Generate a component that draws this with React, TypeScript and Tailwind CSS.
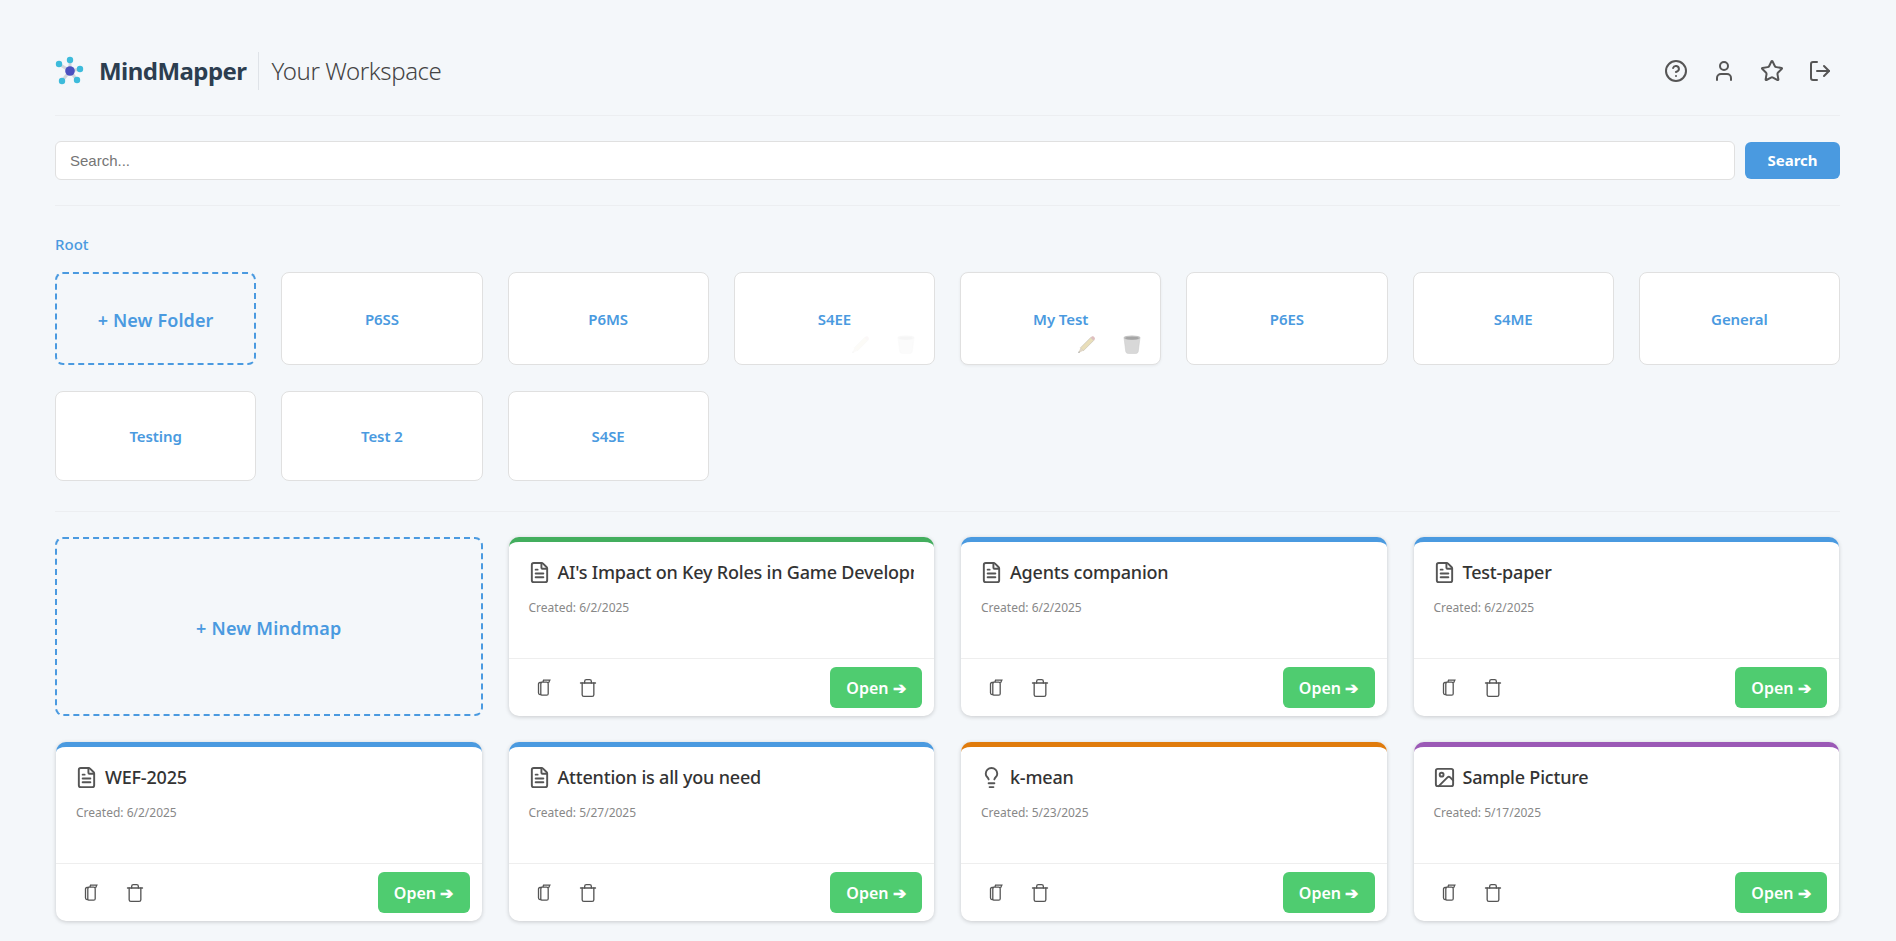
import { CircleHelp, User, Star, LogOut, FileText, Lightbulb, Image, Trash } from "lucide-react";
import type { ReactNode } from "react";

const FONT = "font-['Noto_Sans','Open_Sans',sans-serif]";

function Logo() {
  return (
    <svg width="30" height="30" viewBox="0 0 30 30" className="shrink-0">
      <g stroke="#d0d5dc" strokeWidth="3">
        <line x1="15" y1="15" x2="15" y2="4" />
        <line x1="15" y1="15" x2="4" y2="8" />
        <line x1="15" y1="15" x2="25" y2="13" />
        <line x1="15" y1="15" x2="7" y2="25" />
        <line x1="15" y1="15" x2="22" y2="24" />
      </g>
      <circle cx="15" cy="15" r="4.8" fill="#4a50c0" />
      <g fill="#3dbbdb">
        <circle cx="15" cy="4" r="3.2" />
        <circle cx="4" cy="8" r="3.2" />
        <circle cx="25" cy="13" r="3.2" />
        <circle cx="7" cy="25" r="3.2" />
        <circle cx="22" cy="24" r="3.2" />
      </g>
    </svg>
  );
}

function CopyIcon() {
  return (
    <svg width="14" height="18" viewBox="0 0 14 18" fill="none" stroke="#555" strokeWidth="1.3" className="shrink-0">
      <path d="M5 3.5 H3 Q1.5 3.5 1.5 5 V14 Q1.5 15.5 3 15.5 H4" />
      <rect x="3.8" y="3.2" width="7.4" height="13" rx="1.5" />
      <path d="M6 3 L6.5 1.2 H12.8 L11.5 4" />
    </svg>
  );
}

function Pencil() {
  return (
    <svg width="19" height="19" viewBox="0 0 18 18" className="shrink-0">
      <path d="M3.2 12.2 L13 2.4 L15.8 5.2 L6 15 Z" fill="#e4d6a8" stroke="#b5b0a0" strokeWidth="0.6" />
      <path d="M13 2.4 L14.2 1.3 Q15 0.8 15.8 1.4 L16.8 2.5 Q17.3 3.2 16.8 4 L15.8 5.2 Z" fill="#d8b0b0" />
      <path d="M3.2 12.2 L6 15 L1.2 17 Z" fill="#d9cdb8" />
      <path d="M1.8 15.4 L2.8 16.4 L1.2 17 Z" fill="#777" />
    </svg>
  );
}

function Bin() {
  return (
    <svg width="18" height="19" viewBox="0 0 17 18" className="shrink-0">
      <path d="M1 3 L2.6 15.6 Q3 17.6 5 17.6 H12 Q14 17.6 14.4 15.6 L16 3 Z" fill="#cfcfcf" stroke="#bdbdbd" strokeWidth="0.5" />
      <ellipse cx="8.5" cy="2.6" rx="8" ry="2.2" fill="#b5b5b5" />
      <ellipse cx="8.5" cy="3" rx="6.5" ry="1.4" fill="#8f8f8f" />
    </svg>
  );
}

function Folder({ name, actions, h }: { name: string; actions?: "faint" | "shown"; h: string }) {
  return (
    <div className={`relative flex items-center justify-center pt-px bg-white rounded-[8px] border border-[#e0e0e0] ${h} ${actions === "shown" ? "shadow-[0_1px_3px_rgba(0,0,0,0.06)]" : ""}`}>
      <span className="text-[#4a9ae0] text-[15px] font-semibold tracking-[-0.1px]">{name}</span>
      {actions && (
        <div className={`absolute right-[19px] bottom-[10px] flex gap-[27px] ${actions === "faint" ? "opacity-[0.08]" : "opacity-80"}`}>
          <Pencil />
          <Bin />
        </div>
      )}
    </div>
  );
}

function Card({ title, date, color, icon }: { title: string; date: string; color: string; icon: ReactNode }) {
  return (
    <div className={`mx-px flex flex-col h-[179px] bg-white rounded-[10px] border-t-[5px] shadow-[0_1px_4px_rgba(0,0,0,0.18)] overflow-hidden ${color}`}>
      <div className="flex-1 px-[20px] pt-[15px]">
        <div className="flex items-center gap-[7px] -ml-px h-[30px] overflow-hidden whitespace-nowrap">
          {icon}
          <span className="text-[18px] font-medium text-[#333] tracking-[-0.2px]">{title}</span>
        </div>
        <div className="mt-[12px] text-[12px] text-[#888]">Created: {date}</div>
      </div>
      <div className="flex items-center justify-between h-[58px] border-t border-[#eeeeee] pl-[28px] pr-[12px]">
        <div className="flex items-center gap-[27px]">
          <CopyIcon />
          <Trash size={20} color="#555" strokeWidth={1.6} />
        </div>
        <button className="h-[41px] w-[92px] rounded-[6px] bg-[#4fcc70] text-white text-[16px] font-semibold">Open ➔</button>
      </div>
    </div>
  );
}

const docIcon = <FileText size={23} color="#555" strokeWidth={2} className="shrink-0" />;

export default function App() {
  return (
    <div className={`min-h-[941px] bg-[#f4f7fa] pl-[55px] pr-[56px] pt-[32px] ${FONT}`}>
      <header className="flex items-center justify-between h-[84px] pb-[5px] border-b border-[#eceef1]">
        <div className="flex items-center">
          <Logo />
          <span className="ml-[14px] text-[24px] font-bold text-[#2c3e50] tracking-[-0.55px]">MindMapper</span>
          <span className="ml-[12px] w-px h-[38px] bg-[#dfe3e8]" />
          <span className="ml-[12px] text-[24px] font-light text-[#444] tracking-[-0.4px]">Your Workspace</span>
        </div>
        <div className="flex items-center gap-[24px] pr-[8px]">
          <CircleHelp size={24} color="#555" strokeWidth={2} />
          <User size={24} color="#555" strokeWidth={2} />
          <Star size={24} color="#555" strokeWidth={2} />
          <LogOut size={24} color="#555" strokeWidth={2} />
        </div>
      </header>

      <div className="flex items-center gap-[10px] h-[90px] border-b border-[#eceef1]">
        <input
          placeholder="Search..."
          className="flex-1 h-[39px] bg-white rounded-[6px] border border-[#e0e0e0] px-[14px] text-[15px] font-['Liberation_Sans',sans-serif] placeholder:text-[#757575]"
        />
        <button className="h-[37px] w-[95px] rounded-[6px] bg-[#4a9ae0] text-white text-[15px] font-bold">Search</button>
      </div>

      <div className="mt-[28px] text-[15px] leading-[20px] font-medium text-[#4a9ae0]">Root</div>

      <div className="grid grid-cols-8 gap-x-[25px] gap-y-[26px] mt-[18px] pb-[30px] border-b border-[#eceef1]">
        <div className="flex items-center justify-center pt-[4px] h-[93px] rounded-[8px] border-2 border-dashed border-[#4a9ae0] text-[#4a9ae0] text-[18px] font-semibold tracking-[0.1px]">+ New Folder</div>
        <Folder h="h-[93px]" name="P6SS" />
        <Folder h="h-[93px]" name="P6MS" />
        <Folder h="h-[93px]" name="S4EE" actions="faint" />
        <Folder h="h-[93px]" name="My Test" actions="shown" />
        <Folder h="h-[93px]" name="P6ES" />
        <Folder h="h-[93px]" name="S4ME" />
        <Folder h="h-[93px]" name="General" />
        <Folder h="h-[90px]" name="Testing" />
        <Folder h="h-[90px]" name="Test 2" />
        <Folder h="h-[90px]" name="S4SE" />
      </div>

      <div className="grid grid-cols-4 gap-x-[25px] gap-y-[26px] mt-[25px]">
        <div className="flex items-center justify-center pt-[3px] h-[179px] rounded-[8px] border-2 border-dashed border-[#4a9ae0] text-[#4a9ae0] text-[18px] font-semibold tracking-[0.2px]">+ New Mindmap</div>
        <Card title="AI's Impact on Key Roles in Game Development" date="6/2/2025" color="border-[#43ae5e]" icon={docIcon} />
        <Card title="Agents companion" date="6/2/2025" color="border-[#4a9ae0]" icon={docIcon} />
        <Card title="Test-paper" date="6/2/2025" color="border-[#4a9ae0]" icon={docIcon} />
        <Card title="WEF-2025" date="6/2/2025" color="border-[#4a9ae0]" icon={docIcon} />
        <Card title="Attention is all you need" date="5/27/2025" color="border-[#4a9ae0]" icon={docIcon} />
        <Card title="k-mean" date="5/23/2025" color="border-[#e07b0c]" icon={<Lightbulb size={23} color="#555" strokeWidth={2} className="shrink-0" />} />
        <Card title="Sample Picture" date="5/17/2025" color="border-[#9b59b6]" icon={<Image size={23} color="#555" strokeWidth={2} className="shrink-0" />} />
      </div>
    </div>
  );
}
